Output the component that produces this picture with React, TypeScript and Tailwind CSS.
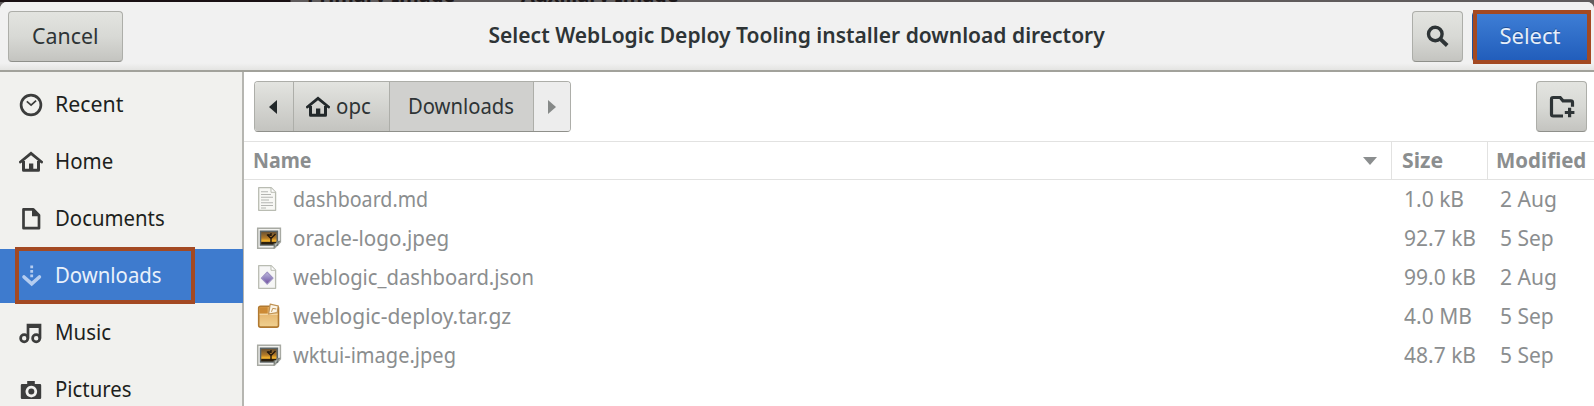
import React from 'react';

type IconProps = { className?: string };

const HomeIcon = ({ className = '' }: IconProps) => (
  <svg width="24" height="22" viewBox="0 0 24 22" className={className} fill="none" stroke="currentColor">
    <path d="M1.4 11 12 2.4l10.6 8.6" strokeWidth="2.8" strokeLinecap="round" />
    <path d="M4.5 10v9.3h15V10" strokeWidth="3" strokeLinejoin="round" />
    <path d="M10 20v-7.5h4.3V20z" fill="currentColor" stroke="none" />
  </svg>
);

const RecentIcon = () => (
  <svg width="24" height="24" viewBox="0 0 24 24" fill="none" stroke="currentColor">
    <circle cx="12" cy="12" r="9.9" strokeWidth="2.7" />
    <path d="M7.8 8.3l4.3 3.9 5-4.6" strokeWidth="1.7" />
  </svg>
);

const DocumentIcon = () => (
  <svg width="24" height="24" viewBox="0 0 24 24" fill="none" stroke="currentColor">
    <path d="M4.5 2.3h9.6l5.9 6v12.9H4.5z" strokeWidth="2.7" strokeLinejoin="round" />
    <path d="M13 1.5v7.8h8z" fill="currentColor" stroke="none" />
  </svg>
);

const DownloadIcon = () => (
  <svg width="24" height="24" viewBox="0 0 24 24" fill="none" stroke="currentColor">
    <path d="M12.7 1.5v13" strokeWidth="2.8" strokeDasharray="2.8 1.7" />
    <path d="M5 13l7.7 6.8 7.7-6.8" strokeWidth="3.6" strokeLinecap="round" />
  </svg>
);

const MusicIcon = () => (
  <svg width="24" height="24" viewBox="0 0 24 24" fill="none" stroke="currentColor">
    <circle cx="5.2" cy="17.3" r="3.6" strokeWidth="2.7" />
    <circle cx="17.2" cy="17.3" r="3.6" strokeWidth="2.7" />
    <path d="M9 17.5V4h12v13.5" strokeWidth="2.7" />
    <path d="M8 6h13" strokeWidth="2" />
  </svg>
);

const CameraIcon = () => (
  <svg width="24" height="24" viewBox="0 0 24 24">
    <path fillRule="evenodd" fill="currentColor" d="M8.2 3h7.6v3h5.2q1.2 0 1.2 1.2v12.6q0 1.2-1.2 1.2H3q-1.2 0-1.2-1.2V7.2Q1.8 6 3 6h5.2zM12.3 7.8a5.8 5.8 0 1 0 .01 0z" />
    <circle cx="12.3" cy="13.6" r="3" fill="currentColor" />
  </svg>
);

const SearchIcon = () => (
  <svg width="24" height="24" viewBox="0 0 24 24" fill="none" stroke="currentColor">
    <circle cx="9.3" cy="9" r="6.8" strokeWidth="3.4" />
    <path d="M13.8 13.5l7.4 7" strokeWidth="3.8" />
  </svg>
);

const NewFolderIcon = () => (
  <svg width="26" height="24" viewBox="0 0 26 24" fill="none" stroke="currentColor">
    <path d="M14 21H4.2q-1.7 0-1.7-1.7V4.2q0-1.7 1.7-1.7h7l2.8 3.3h7.8q1.7 0 1.7 1.7v4.3" strokeWidth="3.2" />
    <path d="M20.6 12.8v9.5M15.8 17.5h9.6" strokeWidth="3.2" />
  </svg>
);

const TextFile = () => (
  <svg width="24" height="26" viewBox="0 0 24 26">
    <path d="M2.7 1.7h12.5l4.4 4.4v18.2H2.7z" fill="#f8f8f5" stroke="#b9bcb2" strokeWidth="1.3" strokeLinejoin="round" />
    <path d="M15 2v4.3h4.3" fill="#fff" stroke="#b9bcb2" />
    <path d="M5 5.8h7M5 8.5h10M5 11.2h12M5 14h8M5 16.8h12M5 19.5h12M5 22h5" stroke="#b4b5b2" strokeWidth="1.1" />
  </svg>
);

const JsonFile = () => (
  <svg width="24" height="26" viewBox="0 0 24 26">
    <defs>
      <linearGradient id="gem" x1="0" y1="0" x2="0" y2="1">
        <stop offset="0" stopColor="#bdb7dd" />
        <stop offset=".55" stopColor="#8f80bd" />
        <stop offset="1" stopColor="#70479b" />
      </linearGradient>
    </defs>
    <path d="M2.7 1.7h12.5l4.4 4.4v18.2H2.7z" fill="#f6f6f6" stroke="#b9bcb2" strokeWidth="1.3" strokeLinejoin="round" />
    <path d="M15 2v4.3h4.3" fill="#fff" stroke="#b9bcb2" />
    <path d="M11.2 8.2l5.8 6-5.8 6-5.8-6z" fill="url(#gem)" stroke="#9d92c2" strokeWidth="1.2" strokeLinejoin="round" />
  </svg>
);

const ImageFile = () => (
  <svg width="26" height="26" viewBox="0 0 26 26">
    <defs>
      <linearGradient id="sunset" x1="0" y1="0" x2="0" y2="1">
        <stop offset="0" stopColor="#6b5233" />
        <stop offset=".5" stopColor="#b37a27" />
        <stop offset=".72" stopColor="#f3b32d" />
        <stop offset="1" stopColor="#4a3110" />
      </linearGradient>
    </defs>
    <path d="M1.7 3.2h22.7V17l-6 6.2H1.7z" fill="#f1f1ee" stroke="#a8aaa3" strokeWidth="1.5" />
    <path d="M3.8 5.5h18.4v15.2H3.8z" fill="#5b6466" />
    <path d="M5.3 7h15.2v12.2H5.3z" fill="url(#sunset)" />
    <path d="M5.3 17h15.2v2.2H5.3z" fill="#2b200f" />
    <path d="M15 18.5v-5l-4-4M15 13.5l4.5-4.5M15 11V8M12 10h3" stroke="#24190d" strokeWidth="1.4" fill="none" />
    <path d="M24.8 15.7l-7.2 8v-5.2l2.2-.6 1-2z" fill="#7d827c" />
    <path d="M22.7 16.8l-3.6 4.4.2-2.4 2-.6z" fill="#c9ccc6" />
  </svg>
);

const ArchiveFile = () => (
  <svg width="24" height="26" viewBox="0 0 24 26">
    <defs>
      <linearGradient id="box" x1="0" y1="0" x2="0" y2="1">
        <stop offset="0" stopColor="#e0a85c" />
        <stop offset="1" stopColor="#f0d191" />
      </linearGradient>
    </defs>
    <path d="M2.7 5q0-1.8 1.8-1.8h16.2q1.8 0 1.8 1.8v17.3q0 1.8-1.8 1.8H4.5q-1.8 0-1.8-1.8z" fill="url(#box)" stroke="#b17a31" strokeWidth="1.6" />
    <path d="M3.6 4.2h8V11h-8z" fill="#cc8a35" />
    <path d="M3.6 11.2h18" stroke="#f6deb0" strokeWidth="1.2" />
    <path d="M14.2 1.2l8 1.8-1 6.5-8.6 1.6z" fill="#fbf5e8" stroke="#c09355" strokeWidth="1.2" />
    <path d="M15.5 8.8l1.2-3.4 3.6.6" stroke="#c09355" fill="none" />
  </svg>
);

const places = [
  { label: 'Recent', icon: <RecentIcon />, fit: 'scale-x-[.97]' },
  { label: 'Home', icon: <HomeIcon />, fit: 'scale-x-[.93]' },
  { label: 'Documents', icon: <DocumentIcon />, fit: 'scale-x-[.925]' },
  { label: 'Downloads', icon: <DownloadIcon />, fit: 'scale-x-[.925]', active: true },
  { label: 'Music', icon: <MusicIcon />, fit: 'scale-x-[.93]' },
  { label: 'Pictures', icon: <CameraIcon />, fit: 'scale-x-[.925]' },
];

const files = [
  { name: 'dashboard.md', icon: <TextFile />, size: '1.0 kB', date: '2 Aug', fit: 'scale-x-[.893]' },
  { name: 'oracle-logo.jpeg', icon: <ImageFile />, size: '92.7 kB', date: '5 Sep', fit: 'scale-x-[.936]' },
  { name: 'weblogic_dashboard.json', icon: <JsonFile />, size: '99.0 kB', date: '2 Aug', fit: 'scale-x-[.919]' },
  { name: 'weblogic-deploy.tar.gz', icon: <ArchiveFile />, size: '4.0 MB', date: '5 Sep', fit: 'scale-x-[.953]' },
  { name: 'wktui-image.jpeg', icon: <ImageFile />, size: '48.7 kB', date: '5 Sep', fit: 'scale-x-[.911]' },
];

const raised =
  'rounded-[4px] border border-[#adaea9] border-b-[#8f908b] bg-linear-to-b from-[#e3e4e0] via-[#d8d9d5] to-[#c4c4c0] text-[#2e3436]';

export default function App() {
  return (
    <div className="h-[406px] w-[1594px] overflow-hidden bg-[#5f5b5c] font-['Noto_Sans',sans-serif] text-[22px] leading-[30px]">
      <div className="flex h-[2px] overflow-hidden bg-linear-to-r from-[#1a1114] from-[290px] to-[#5f5b5c] to-[291px] text-[20px] font-bold text-[#1c1719]">
        <span className="-mt-[20px] ml-[307px] w-[214px] shrink-0">Primary Image</span>
        <span className="-mt-[20px] shrink-0">Auxiliary Image</span>
      </div>

      <div className="flex h-[404px] flex-col overflow-hidden rounded-t-[7px] bg-white">
        <header className="flex h-[70px] shrink-0 items-start border-b-2 border-[#a2a29b] bg-linear-to-b from-[#f1f1f1] from-90% to-[#e4e4e2] pt-[9px] pl-2">
          <button className={`flex h-[51px] w-[115px] items-center justify-center pb-[4px] ${raised}`}>
            <span className="scale-x-[.97]">Cancel</span>
          </button>
          <h1 className="flex h-[46px] flex-1 items-center justify-center font-semibold text-[#2e3436]">
            <span className="-mr-[58px] scale-x-[.955] whitespace-nowrap">
              Select WebLogic Deploy Tooling installer download directory
            </span>
          </h1>
          <button className={`mr-[9px] flex size-[51px] items-center justify-center ${raised}`}>
            <SearchIcon />
          </button>
          <button className="relative mr-[6px] flex h-[51px] w-[116px] items-center justify-center rounded-[4px] border border-[#1c52a0] bg-linear-to-b from-[#3f7fd6] to-[#215dbb] pb-[4px] text-[#e6eefa] [text-shadow:0_-1px_#1f4f96]">
            <span>Select</span>
            <span className="absolute -top-[2px] left-0 h-[54px] w-[118px] border-4 border-[#a34922]" />
          </button>
        </header>

        <div className="flex min-h-0 flex-1">
          <nav className="flex w-[244px] shrink-0 flex-col gap-[3px] border-r-2 border-[#b6b6b1] bg-[#f1f1ee] pt-[6px] text-[#1d1f20]">
            {places.map((p) => (
              <div
                key={p.label}
                className={`relative flex h-[54px] shrink-0 items-center ${p.active ? '-mr-px bg-[#3e7bce] text-[#e9f1fb]' : ''}`}
              >
                <span className={`ml-[19px] flex w-[36px] items-center ${p.active ? 'text-[#b5cdf0]' : 'text-[#3c3d3c]'}`}>
                  {p.icon}
                </span>
                <span className={`mb-[4px] origin-left ${p.fit}`}>{p.label}</span>
                {p.active && (
                  <span className="absolute -top-[2px] left-[15px] h-[57px] w-[180px] border-4 border-[#a34922]" />
                )}
              </div>
            ))}
          </nav>

          <main className="flex min-w-0 flex-1 flex-col">
            <div className="flex h-[69px] shrink-0 items-start justify-between pt-[9px] pr-[7px] pl-[10px]">
              <div className="flex h-[51px] w-[317px] overflow-hidden rounded-[4px] border border-[#adaea9] border-b-[#8f908b] text-[#2e3436]">
                <div className="flex w-[39px] items-center justify-center border-r border-[#adaea9] bg-linear-to-b from-[#e3e4e0] to-[#c4c4c0] pr-[3px]">
                  <svg width="8" height="14" viewBox="0 0 8 14"><path d="M8 0v14L0 7z" fill="#22282a" /></svg>
                </div>
                <div className="flex w-[96px] items-center border-r border-[#adaea9] bg-linear-to-b from-[#e3e4e0] to-[#c4c4c0] pl-[12px]">
                  <HomeIcon className="shrink-0 text-[#22282a]" />
                  <span className="mb-[4px] ml-[6px] origin-left scale-x-[.93]">opc</span>
                </div>
                <div className="flex w-[144px] items-center border-r border-[#adaea9] bg-[#d0d0ce] pl-[18px]">
                  <span className="mb-[4px] origin-left scale-x-[.92]">Downloads</span>
                </div>
                <div className="flex flex-1 items-center justify-center bg-[#ededed]">
                  <svg width="8" height="14" viewBox="0 0 8 14"><path d="M0 0v14l8-7z" fill="#868988" /></svg>
                </div>
              </div>
              <button className={`flex size-[51px] items-center justify-center ${raised}`}>
                <NewFolderIcon />
              </button>
            </div>

            <div className="grid h-[39px] shrink-0 grid-cols-[1148px_96px_1fr] border-y border-[#e2e2e1] font-bold text-[#8b8e8f]">
              <div className="flex items-center justify-between border-r border-[#e2e2e1] pr-[14px] pl-[9px]">
                <span className="mb-[4px] origin-left scale-x-[.89]">Name</span>
                <svg width="14" height="8" viewBox="0 0 14 8"><path d="M0 0h14L7 8z" fill="#8b8e8f" /></svg>
              </div>
              <div className="flex items-center border-r border-[#e2e2e1] pl-[10px]">
                <span className="mb-[4px] origin-left scale-x-[.965]">Size</span>
              </div>
              <div className="flex items-center pl-[8px]">
                <span className="mb-[4px] origin-left scale-x-[.93]">Modified</span>
              </div>
            </div>

            <div className="text-[#8b8e8f]">
              {files.map((f) => (
                <div key={f.name} className="grid h-[39px] grid-cols-[1160px_96px_1fr] items-center">
                  <div className="flex items-center">
                    <span className="ml-3 flex w-[37px] pb-px">{f.icon}</span>
                    <span className={`mb-[4px] origin-left ${f.fit}`}>{f.name}</span>
                  </div>
                  <span className="mb-[4px] origin-left scale-x-[.955]">{f.size}</span>
                  <span className="mb-[4px] origin-left scale-x-[.955]">{f.date}</span>
                </div>
              ))}
            </div>
          </main>
        </div>
      </div>
    </div>
  );
}
